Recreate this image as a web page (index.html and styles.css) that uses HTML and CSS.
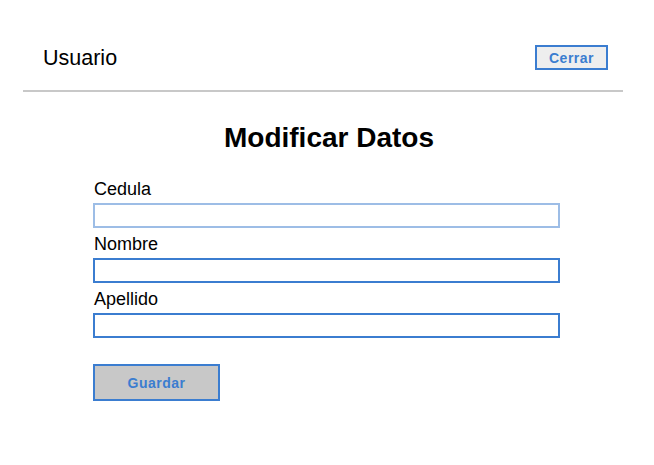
FILE: index.html
```html
<!DOCTYPE html>
<html lang="es">
<head>
<meta charset="utf-8">
<title>Modificar Datos</title>
<link rel="stylesheet" href="styles.css">
</head>
<body>
<div class="page">
  <header class="topbar">
    <span class="user">Usuario</span>
    <button class="btn btn-close" type="button">Cerrar</button>
  </header>
  <form class="form">
    <h1 class="title">Modificar Datos</h1>
    <label class="label" for="cedula">Cedula</label>
    <input class="input input-light" id="cedula" type="text">
    <label class="label" for="nombre">Nombre</label>
    <input class="input" id="nombre" type="text">
    <label class="label" for="apellido">Apellido</label>
    <input class="input" id="apellido" type="text">
    <button class="btn btn-save" type="button">Guardar</button>
  </form>
</div>
</body>
</html>
```
FILE: styles.css
```css
* { box-sizing: border-box; }
html, body { margin: 0; background: #fff; }
body { font-family: "Liberation Sans", Arial, sans-serif; color: #000; }
.page { width: 600px; margin: 0 0 0 23px; }
.topbar {
  display: flex;
  align-items: center;
  justify-content: space-between;
  padding: 45px 15px 20px 20px;
  border-bottom: 2px solid #c8c8c8;
}
.user { font-size: 21.5px; line-height: 25px; margin: 1px 0 -1px; }
.btn {
  font-family: "Liberation Sans", Arial, sans-serif;
  font-weight: bold;
  font-size: 14px;
  letter-spacing: 0.5px;
  color: #3b7dd0;
  border: 2px solid #3b7dd0;
  padding: 0;
  cursor: pointer;
}
.btn-close { width: 73px; height: 25px; background: #eeeeee; }
.form { margin: 30px 0 0 70px; width: 467px; }
.title {
  margin: 0 0 24px;
  font-size: 28px;
  line-height: 32px;
  font-weight: bold;
  text-align: center;
  padding-left: 5px;
}
.label { display: block; font-size: 18px; line-height: 22px; margin: 0 0 3px 1px; }
.input {
  display: block;
  width: 467px;
  height: 25px;
  margin: 0 0 5px;
  border: 2px solid #3b7dd0;
  background: #fff;
  outline: none;
}
.input-light { border-color: #9dbde6; }
.input + .label + .input + .label { margin-top: 1px; }
.btn-save { display: block; margin-top: 26px; width: 127px; height: 37px; background: #c8c8c8; }
```
